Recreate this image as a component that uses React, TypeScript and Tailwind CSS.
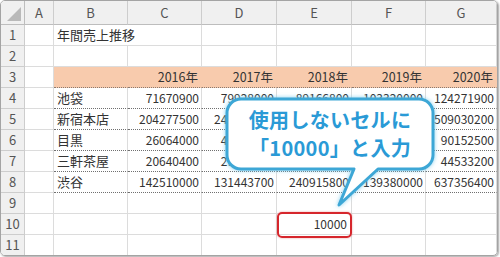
import React from 'react';

const columns = ['A', 'B', 'C', 'D', 'E', 'F', 'G'];
const years = ['2016年', '2017年', '2018年', '2019年', '2020年'];

const stores: string[][] = [
  ['池袋', '71670900', '79928000', '89166800', '103320000', '124271900'],
  ['新宿本店', '204277500', '245612000', '287944500', '398120500', '509030200'],
  ['目黒', '26064000', '41852000', '56318400', '72400800', '90152500'],
  ['三軒茶屋', '20640400', '29416800', '33120600', '38904000', '44533200'],
  ['渋谷', '142510000', '131443700', '240915800', '139380000', '637356400'],
];

const headCell =
  'bg-[#f0f0f0] border-r border-b border-[#cdcdcd] flex items-center justify-center text-[13px] text-[#555]';
const plainCell = 'border-r border-b border-[#dcdcdc]';
const dataCell =
  'border-r border-b border-r-[#dcdcdc] border-b-[#707070] [border-bottom-style:dotted] flex items-center text-[#333] whitespace-nowrap overflow-hidden';

function RowNum({ n }: { n: number }) {
  return <div className={headCell}>{n}</div>;
}

export default function App() {
  return (
    <div className="relative w-[500px] h-[257px] bg-white overflow-hidden font-['Noto_Sans_CJK_JP',sans-serif]">
      {/* Excel frame */}
      <div className="w-[498px] h-[256px] border border-[#a4a4a4] rounded-[5px] overflow-hidden shadow-[1px_1px_2px_rgba(0,0,0,0.35)]">
        <div className="grid grid-cols-[24px_29px_74px_74px_75px_75px_74px_1fr] grid-rows-[24px_repeat(11,21px)]">
          {/* header */}
          <div className="bg-[#f0f0f0] border-r border-b border-[#bdbdbd] relative">
            <svg className="absolute right-[3px] bottom-[3px]" width="14" height="14" viewBox="0 0 14 14">
              <polygon points="14,0 14,14 0,14" fill="#b9b9b9" />
            </svg>
          </div>
          {columns.map((c) => (
            <div key={c} className={`${headCell} border-b-[#bdbdbd]`}>
              {c}
            </div>
          ))}

          {/* row 1 */}
          <RowNum n={1} />
          <div className={plainCell} />
          <div className="border-b border-[#dcdcdc] flex items-center pl-[3px] text-[13px] text-[#333] whitespace-nowrap overflow-visible z-10">
            年間売上推移
          </div>
          {[0, 1, 2, 3, 4].map((i) => (
            <div key={i} className={plainCell} />
          ))}

          {/* row 2 */}
          <RowNum n={2} />
          {[0, 1, 2, 3, 4, 5, 6].map((i) => (
            <div key={i} className={plainCell} />
          ))}

          {/* row 3 */}
          <RowNum n={3} />
          <div className={plainCell} />
          <div className="bg-[#f8cbad] border-r border-r-[#f8cbad] border-b border-b-[#8a7a70] [border-bottom-style:dotted]" />
          {years.map((y) => (
            <div
              key={y}
              className="bg-[#f8cbad] border-r border-r-[#f8cbad] border-b border-b-[#8a7a70] [border-bottom-style:dotted] flex items-center justify-end pr-[3px] text-[12.5px] text-[#333]"
            >
              {y}
            </div>
          ))}

          {/* rows 4-8 */}
          {stores.map((row, r) => (
            <React.Fragment key={row[0]}>
              <RowNum n={r + 4} />
              <div className={plainCell} />
              <div className={`${dataCell} pl-[3px] text-[13px]`}>{row[0]}</div>
              {row.slice(1).map((v, i) => (
                <div key={i} className={`${dataCell} justify-end pr-[2px] text-[12px]`}>
                  {v}
                </div>
              ))}
            </React.Fragment>
          ))}

          {/* rows 9-11 */}
          {[9, 10, 11].map((n) => (
            <React.Fragment key={n}>
              <RowNum n={n} />
              {[0, 1, 2, 3, 4, 5, 6].map((i) =>
                n === 10 && i === 4 ? (
                  <div key={i} className={`${plainCell} flex items-center justify-end pr-[4px] text-[12px] text-[#333]`}>
                    10000
                  </div>
                ) : (
                  <div key={i} className={plainCell} />
                )
              )}
            </React.Fragment>
          ))}
        </div>
      </div>

      {/* red highlight on E10 */}
      <div className="absolute left-[277px] top-[212px] w-[75px] h-[26px] border-[2.5px] border-[#d6262c] rounded-[5px] shadow-[0_0_2px_rgba(214,38,44,0.5)]" />

      {/* callout */}
      <svg className="absolute inset-0 pointer-events-none" width="500" height="257" viewBox="0 0 500 257">
        <defs>
          <filter id="glow" x="-20%" y="-20%" width="140%" height="140%">
            <feGaussianBlur in="SourceAlpha" stdDeviation="2" result="b" />
            <feFlood floodColor="#6cc6ec" floodOpacity="0.8" />
            <feComposite in2="b" operator="in" result="g" />
            <feMerge>
              <feMergeNode in="g" />
              <feMergeNode in="SourceGraphic" />
            </feMerge>
          </filter>
        </defs>
        <path
          d="M241 99 H419 A14 14 0 0 1 433 113 V155 A14 14 0 0 1 419 169 H378 L339 205 L354 169 H241 A14 14 0 0 1 227 155 V113 A14 14 0 0 1 241 99 Z"
          fill="#ffffff"
          stroke="#3ea7d6"
          strokeWidth="3"
          strokeLinejoin="round"
          filter="url(#glow)"
        />
      </svg>
      <div className="absolute left-[227px] top-[99px] w-[206px] h-[70px] flex flex-col items-center justify-center text-[20px] leading-[28px] font-bold text-[#2a9ad6] tracking-[0.3px]">
        <span>使用しないセルに</span>
        <span>「10000」と入力</span>
      </div>
    </div>
  );
}
